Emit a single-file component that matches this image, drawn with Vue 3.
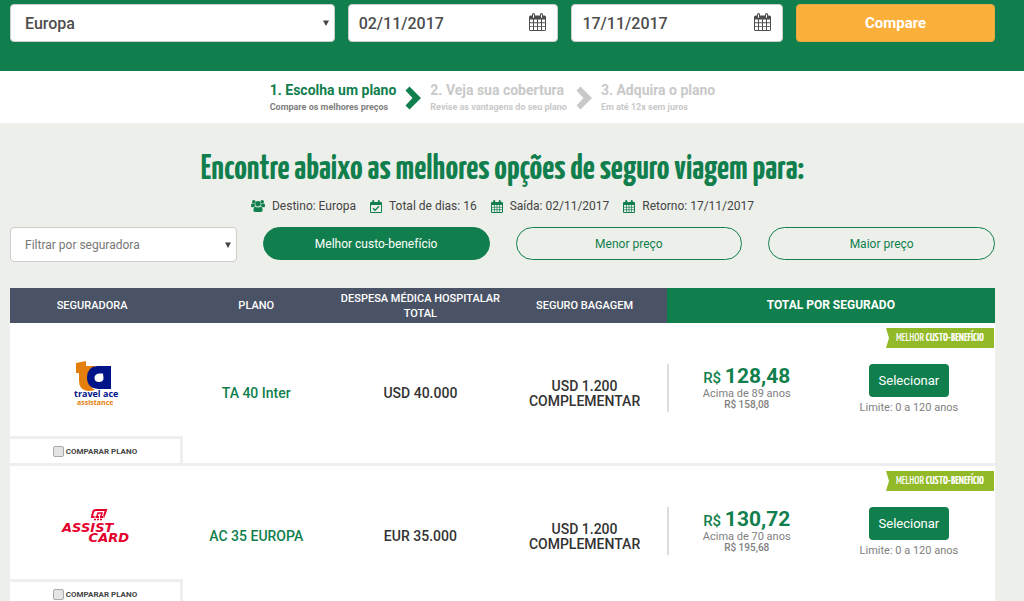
<script setup>
import { ref } from 'vue'

const destination = ref('Europa')
const departure = ref('02/11/2017')
const comeback = ref('17/11/2017')
const insurer = ref('')
const sort = ref('best')

const steps = [
  { title: '1. Escolha um plano', note: 'Compare os melhores preços', active: true },
  { title: '2. Veja sua cobertura', note: 'Revise as vantagens do seu plano', active: false },
  { title: '3. Adquira o plano', note: 'Em até 12x sem juros', active: false },
]

const facts = [
  { icon: 'users', text: 'Destino: Europa' },
  { icon: 'check', text: 'Total de dias: 16' },
  { icon: 'calendar', text: 'Saída: 02/11/2017' },
  { icon: 'calendar', text: 'Retorno: 17/11/2017' },
]

const sorts = [
  { id: 'best', label: 'Melhor custo-benefício' },
  { id: 'low', label: 'Menor preço' },
  { id: 'high', label: 'Maior preço' },
]

const plans = [
  { id: 'ta', name: 'TA 40 Inter', medical: 'USD 40.000', price: '128,48', age: 'Acima de 89 anos', senior: 'R$ 158,08' },
  { id: 'ac', name: 'AC 35 EUROPA', medical: 'EUR 35.000', price: '130,72', age: 'Acima de 70 anos', senior: 'R$ 195,68' },
]
</script>

<template>
  <div class="page">
    <header class="search">
      <form class="container search-grid" @submit.prevent>
        <div class="field">
          <select v-model="destination" class="control" aria-label="Destino">
            <option>Europa</option>
          </select>
          <svg class="arrow" viewBox="0 0 6 6" aria-hidden="true"><path d="M0 0.5h6L3 6z" /></svg>
        </div>
        <div class="field">
          <input v-model="departure" class="control date" type="text" aria-label="Saída" />
          <svg class="cal" viewBox="0 0 17 18" aria-hidden="true">
            <path fill-rule="evenodd" d="M1.5 2.5H3V1.6Q3 0 4.5 0T6 1.600V2.500h5V1.600Q11 0 12.500 0T14 1.600V2.500h1.500Q17 2.500 17 4v12.500Q17 18 15.500 18h-14Q0 18 0 16.500V4Q0 2.500 1.500 2.500zM4 1.500v3.200h1V1.500zM12 1.500v3.200h1V1.500zM1 6.500v2.800h3V6.500zM5 6.500v2.800h3V6.500zM9 6.500v2.800h3V6.500zM13 6.500v2.800h3V6.500zM1 10.200v3h3v-3zM5 10.200v3h3v-3zM9 10.200v3h3v-3zM13 10.200v3h3v-3zM1 14v3h3v-3zM5 14v3h3v-3zM9 14v3h3v-3zM13 14v3h3v-3z" />
          </svg>
        </div>
        <div class="field">
          <input v-model="comeback" class="control date" type="text" aria-label="Retorno" />
          <svg class="cal" viewBox="0 0 17 18" aria-hidden="true">
            <path fill-rule="evenodd" d="M1.5 2.5H3V1.6Q3 0 4.5 0T6 1.600V2.500h5V1.600Q11 0 12.500 0T14 1.600V2.500h1.500Q17 2.500 17 4v12.500Q17 18 15.500 18h-14Q0 18 0 16.500V4Q0 2.500 1.500 2.500zM4 1.500v3.200h1V1.500zM12 1.500v3.200h1V1.500zM1 6.500v2.800h3V6.500zM5 6.500v2.800h3V6.500zM9 6.500v2.800h3V6.500zM13 6.500v2.800h3V6.500zM1 10.200v3h3v-3zM5 10.200v3h3v-3zM9 10.200v3h3v-3zM13 10.200v3h3v-3zM1 14v3h3v-3zM5 14v3h3v-3zM9 14v3h3v-3zM13 14v3h3v-3z" />
          </svg>
        </div>
        <button class="compare" type="submit">Compare</button>
      </form>
    </header>

    <nav class="steps" aria-label="Etapas">
      <template v-for="(step, i) in steps" :key="step.title">
        <div class="step" :class="{ active: step.active }">
          <strong>{{ step.title }}</strong>
          <small>{{ step.note }}</small>
        </div>
        <svg v-if="i < 2" class="chevron" :class="{ active: step.active }" viewBox="0 0 16 24" aria-hidden="true">
          <path d="M4.500 0.500L16 12 4.500 23.500 0.500 19.500 7.500 12 0.500 4.500z" />
        </svg>
      </template>
    </nav>

    <main class="container">
      <h1>Encontre abaixo as melhores opções de seguro viagem para:</h1>

      <ul class="facts">
        <li v-for="fact in facts" :key="fact.text">
          <svg v-if="fact.icon === 'users'" class="users" viewBox="0 0 14 12" aria-hidden="true">
            <circle cx="2.800" cy="1.900" r="1.800" /><circle cx="11.200" cy="1.900" r="1.800" /><circle cx="7" cy="3.800" r="2.700" />
            <path d="M0 5.500Q0 3.500 1.200 3.500Q2.500 4.300 3.700 4Q3.700 5.500 4.400 6.300Q3 6.500 2.600 7.200H1Q0 7.200 0 6zM14 5.500Q14 3.500 12.800 3.500Q11.500 4.300 10.300 4Q10.300 5.500 9.600 6.300Q11 6.500 11.400 7.200H13Q14 7.200 14 6zM4.500 6.700Q7 8.300 9.500 6.700Q11.600 7 11.600 10.300Q11.600 12 10 12H4Q2.400 12 2.400 10.300Q2.400 7 4.500 6.700z" />
          </svg>
          <svg v-else class="mini" viewBox="0 0 12 13" aria-hidden="true">
            <path fill-rule="evenodd" d="M1 2h1.200V1Q2.200 0 3.200 0T4.200 1V2h3.600V1Q7.800 0 8.800 0T9.800 1V2H11Q12 2 12 3v9Q12 13 11 13H1Q0 13 0 12V3Q0 2 1 2zM1 5v7h10V5z" />
            <path v-if="fact.icon === 'check'" class="line tick" d="M3 8.300l2 2 4-4" />
            <path v-else class="line" d="M3.500 5v7M6 5v7M8.500 5v7M1 7.300h10M1 9.700h10" />
          </svg>
          {{ fact.text }}
        </li>
      </ul>

      <div class="filters">
        <div class="field">
          <select v-model="insurer" class="control insurer" aria-label="Filtrar por seguradora">
            <option value="">Filtrar por seguradora</option>
          </select>
          <svg class="arrow" viewBox="0 0 6 6" aria-hidden="true"><path d="M0 0.500h6L3 6z" /></svg>
        </div>
        <button
          v-for="item in sorts"
          :key="item.id"
          type="button"
          class="pill"
          :class="{ selected: sort === item.id }"
          @click="sort = item.id"
        >
          {{ item.label }}
        </button>
      </div>

      <table class="plans">
        <thead>
          <tr>
            <th scope="col">SEGURADORA</th>
            <th scope="col">PLANO</th>
            <th scope="col">DESPESA MÉDICA HOSPITALAR TOTAL</th>
            <th scope="col">SEGURO BAGAGEM</th>
            <th scope="col" colspan="2" class="total">TOTAL POR SEGURADO</th>
          </tr>
        </thead>
        <tbody v-for="plan in plans" :key="plan.id">
          <tr class="offer">
            <td class="brand">
              <svg v-if="plan.id === 'ta'" class="logo" viewBox="0 0 74 48" role="img" aria-label="Travel Ace Assistance">
                <path fill="#e57f0b" d="M21 4l10-2v5h9v8h-5v8q0 5 5 8-3 1-7 1-9-1-9-10v-8h-3z" />
                <path fill="#001489" fill-rule="evenodd" d="M42 7h14v23H43q-11-1-11-11.500T42 7zM48 14.500h-4q-4.500.5-4.500 4.500t4.500 4 4.500-4z" />
                <text x="19" y="38" class="ta-name">travel ace</text>
                <text x="22" y="46" class="ta-sub">assistance</text>
              </svg>
              <svg v-else class="logo" viewBox="0 0 74 48" role="img" aria-label="Assist Card">
                <g fill="none" stroke="#e4002b" stroke-width="2">
                  <path d="M37 14l1.500-5Q39 8 41 8h10l-2 6" />
                  <path d="M42 14l1-3h4l-1 3" stroke-width="1.500" />
                  <path d="M36 15h14" stroke-dasharray="3.500 1" />
                  <path d="M39 17.500h9" stroke-dasharray="2 1" stroke-width="1.500" />
                </g>
                <text x="7" y="30" class="ac-name">ASSIST</text>
                <text x="74" y="40" text-anchor="end" class="ac-name">CARD</text>
              </svg>
            </td>
            <td class="name">{{ plan.name }}</td>
            <td>{{ plan.medical }}</td>
            <td>USD 1.200<br />COMPLEMENTAR</td>
            <td class="top">
              <div class="price">
                <p class="value">R$ <b>{{ plan.price }}</b></p>
                <p>{{ plan.age }}</p>
                <p class="senior">{{ plan.senior }}</p>
              </div>
            </td>
            <td class="top action">
              <span class="ribbon">MELHOR <b>CUSTO-BENEFÍCIO</b></span>
              <button class="select" type="button">Selecionar</button>
              <p>Limite: 0 a 120 anos</p>
            </td>
          </tr>
          <tr>
            <td colspan="6" class="extra">
              <label class="check"><input type="checkbox" />COMPARAR PLANO</label>
            </td>
          </tr>
        </tbody>
      </table>
    </main>
  </div>
</template>

<style>
body {
  margin: 0;
  background: #edefeb;
}
</style>

<style scoped>
.page {
  font-family: Roboto, "Liberation Sans", sans-serif;
  color: #444;
  min-height: 100vh;
}
.page * {
  box-sizing: border-box;
}
p {
  margin: 0;
}
button,
input,
select {
  font-family: inherit;
}
.container {
  padding: 0 29px 0 10px;
}
.search {
  background: #107f4d;
  padding: 4px 0 29px;
}
.search-grid {
  display: grid;
  grid-template-columns: 325fr 211fr 212fr 199fr;
  gap: 13px;
}
.field {
  position: relative;
}
.control {
  appearance: none;
  display: block;
  width: 100%;
  height: 38px;
  margin: 0;
  padding: 0 14px;
  border: 1px solid #ccc;
  border-radius: 4px;
  background: #fff;
  color: #4d4d4d;
  font-size: 16px;
  font-weight: 500;
}
.date {
  padding: 0 10px;
}
.arrow {
  position: absolute;
  right: 6px;
  top: 50%;
  width: 6px;
  height: 6px;
  margin-top: -3px;
  fill: #444;
  pointer-events: none;
}
.cal {
  position: absolute;
  right: 12px;
  top: 9px;
  width: 17px;
  height: 18px;
  fill: #4d4d4d;
}
.compare {
  height: 38px;
  border: 1px solid #e8a93f;
  border-radius: 4px;
  background: #fcb03c;
  color: #fff;
  font-size: 15px;
  font-weight: 700;
}
.steps {
  display: flex;
  justify-content: center;
  align-items: center;
  gap: 9px;
  height: 52px;
  padding: 2px 39px 0 0;
  background: #fff;
}
.step {
  color: #c9c9c9;
}
.step strong,
.step small {
  display: block;
}
.step strong {
  font-size: 14px;
  line-height: 18px;
}
.step small {
  font-size: 9px;
  line-height: 16px;
  font-weight: 700;
}
.step.active {
  color: #107f4d;
}
.step.active small {
  color: #808080;
}
.chevron {
  width: 16px;
  height: 24px;
  fill: #c9c9c9;
}
.chevron.active {
  fill: #107f4d;
}
h1 {
  margin: 0;
  padding-top: 27px;
  color: #107f4d;
  font-family: "Yanone Kaffeesatz", "Liberation Sans Narrow", Roboto, sans-serif;
  font-size: 35px;
  line-height: 40px;
  font-weight: 700;
  text-align: center;
}
.facts {
  display: flex;
  justify-content: center;
  gap: 14px;
  margin: 0;
  padding: 6px 0 11px;
  list-style: none;
  font-size: 12px;
  line-height: 20px;
}
.facts li {
  display: flex;
  align-items: center;
  gap: 7px;
}
.facts svg {
  fill: #107f4d;
}
.users {
  width: 14px;
  height: 12px;
}
.mini {
  width: 12px;
  height: 13px;
}
.line {
  fill: none;
  stroke: #107f4d;
  stroke-width: 0.7;
}
.tick {
  stroke-width: 1.3;
}
.filters {
  display: grid;
  grid-template-columns: repeat(4, 1fr);
  gap: 26px;
  padding-bottom: 26px;
}
.insurer {
  height: 35px;
  color: #777;
  font-size: 12px;
  font-weight: 400;
}
.pill {
  height: 33px;
  border: 1px solid #107f4d;
  border-radius: 17px;
  background: transparent;
  color: #107f4d;
  font-size: 12px;
}
.pill.selected {
  background: #107f4d;
  color: #fff;
}
.plans {
  width: 100%;
  table-layout: fixed;
  border-collapse: separate;
  border-spacing: 0;
  background: #fff;
}
th {
  height: 35px;
  padding: 0;
  background: #4a5365;
  color: #fff;
  font-size: 11px;
  line-height: 15px;
  font-weight: 500;
}
th.total {
  background: #107f4d;
  font-size: 12px;
  font-weight: 700;
}
td {
  padding: 0;
  text-align: center;
}
.offer td {
  height: 113px;
  padding-top: 28px;
  color: #333;
  font-size: 14px;
  line-height: 15px;
  font-weight: 500;
}
.offer .brand {
  padding-top: 6px;
}
.offer .name {
  color: #107f4d;
}
.offer .top {
  padding-top: 41px;
  vertical-align: top;
  color: #808080;
  font-size: 11px;
  line-height: 11px;
  font-weight: 400;
}
.offer .top:not(.action) {
  padding-right: 6px;
}
.logo {
  display: block;
  width: 74px;
  height: 48px;
  margin: 0 auto;
}
.ta-name {
  fill: #001489;
  font: 700 9px "Open Sans", sans-serif;
}
.ta-sub {
  fill: #e57f0b;
  font: 700 7px "Open Sans", sans-serif;
}
.ac-name {
  fill: #e4002b;
  font: italic 700 13px "DejaVu Sans", sans-serif;
}
.price {
  height: 48px;
  border-left: 2px solid #ddd;
}
.price .value {
  padding-top: 3px;
  color: #107f4d;
  font-size: 15px;
  line-height: 19px;
  font-weight: 500;
}
.value b {
  font-size: 21px;
  font-weight: 700;
}
.price .senior {
  font-size: 10px;
  font-weight: 500;
}
.offer .action {
  position: relative;
  padding-right: 8px;
}
.action p {
  line-height: 22px;
}
.select {
  width: 80px;
  height: 33px;
  padding: 0;
  border: 0;
  border-radius: 4px;
  background: #107f4d;
  color: #fff;
  font-size: 13px;
}
.ribbon {
  position: absolute;
  top: 5px;
  right: 1px;
  width: 108px;
  background: #92b927;
  clip-path: polygon(0 0, 100% 0, 100% 100%, 0 100%, 3px 50%);
  color: #fff;
  font-family: "Yanone Kaffeesatz", "Liberation Sans Narrow", Roboto, sans-serif;
  font-size: 12px;
  line-height: 20px;
  white-space: nowrap;
}
.extra {
  height: 30px;
  border-bottom: 3px solid #eee;
}
.check {
  display: flex;
  align-items: center;
  justify-content: center;
  gap: 2px;
  width: 173px;
  height: 27px;
  border-top: 3px solid #eee;
  border-right: 3px solid #eee;
  color: #444;
  font-size: 8px;
  font-weight: 700;
}
.check input {
  appearance: none;
  width: 11px;
  height: 11px;
  margin: 0;
  border: 1px solid #aaa;
  border-radius: 2px;
  background: #e4e4e4;
}
.check input:checked {
  background: #107f4d;
}
</style>
